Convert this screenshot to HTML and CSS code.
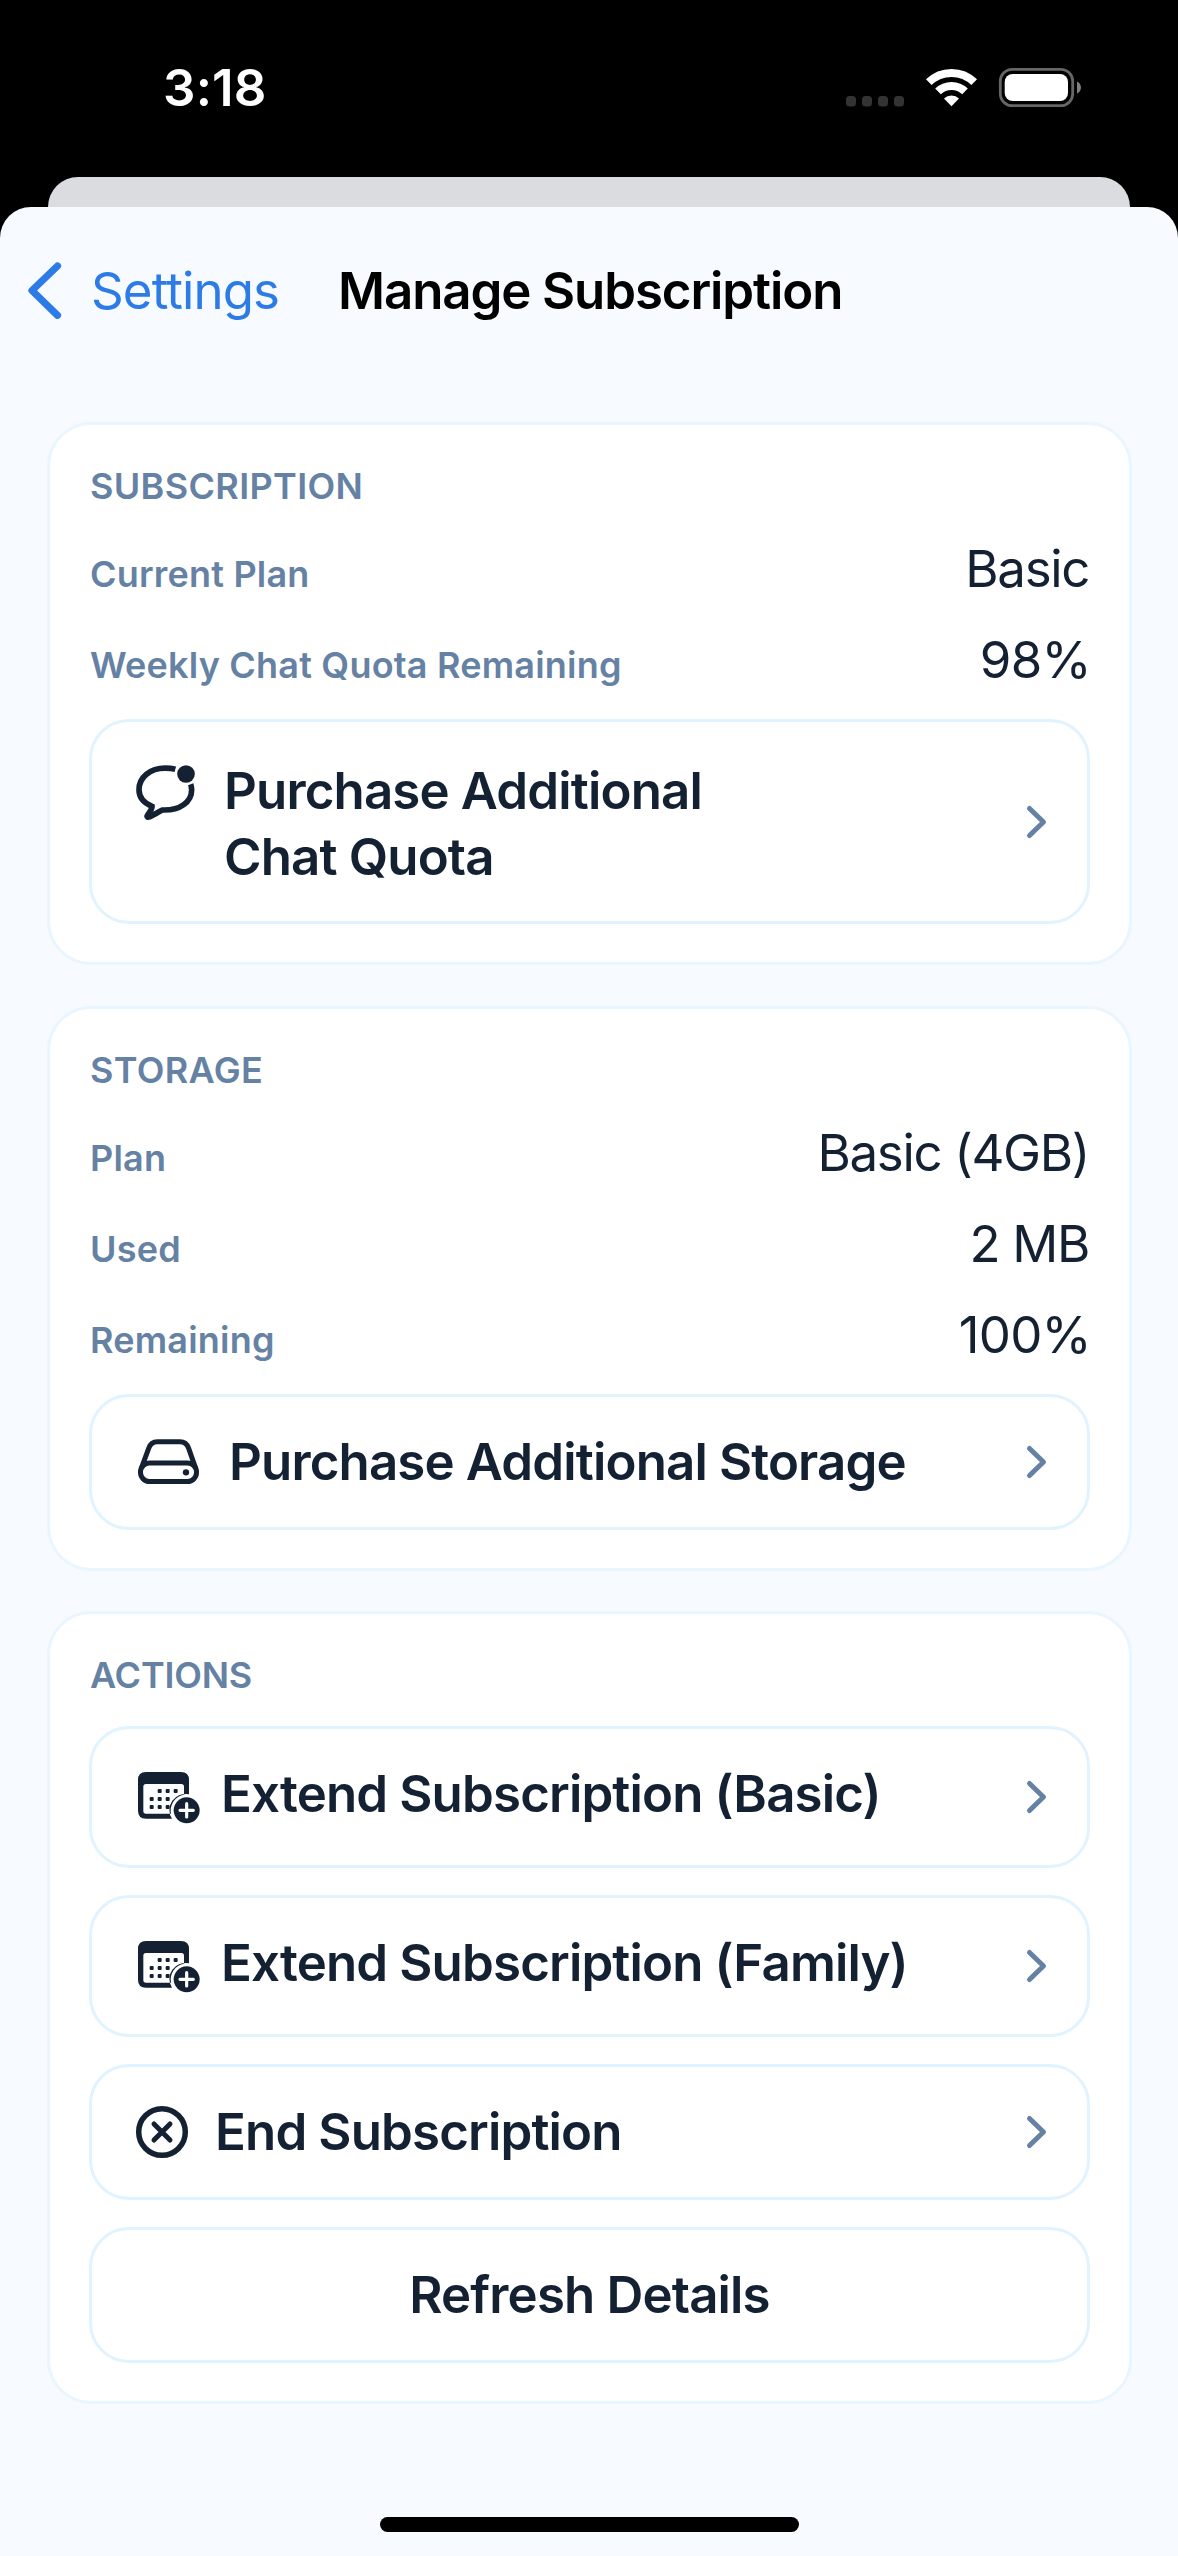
FILE: index.html
```html
<!DOCTYPE html>
<html lang="en">
<head>
<meta charset="utf-8">
<title>Manage Subscription</title>
<link rel="stylesheet" href="styles.css">
</head>
<body>
<svg class="sprite" aria-hidden="true">
  <symbol id="chevron" viewBox="0 0 24 36"><path d="M4.5 4.5 L18.5 18 L4.5 31.5" fill="none" stroke="currentColor" stroke-width="5" stroke-linecap="round" stroke-linejoin="round"/></symbol>
  <symbol id="calendar" viewBox="42 54 210 168">
    <path fill="currentColor" fill-rule="evenodd" d="M78 63 H183 Q207 63 207 87 V130 A48 48 0 0 0 156 203 H78 Q54 203 54 179 V87 Q54 63 78 63 Z M78 99 Q70 99 70 107 V180 Q70 188 78 188 H153 A48 48 0 0 1 192 131 V107 Q192 99 184 99 Z"/>
    <g fill="currentColor">
      <rect x="113" y="114" width="12" height="12" rx="3"/><rect x="137" y="114" width="12" height="12" rx="3"/><rect x="161" y="114" width="12" height="12" rx="3"/>
      <rect x="89" y="138" width="12" height="12" rx="3"/><rect x="113" y="138" width="12" height="12" rx="3"/><rect x="137" y="138" width="12" height="12" rx="3"/>
      <rect x="89" y="162" width="12" height="12" rx="3"/><rect x="113" y="162" width="12" height="12" rx="3"/><rect x="137" y="162" width="12" height="12" rx="3"/>
      <circle cx="200" cy="178" r="39"/>
    </g>
    <path d="M180 178 H220 M200 158 V198" stroke="#fff" stroke-width="9.5" stroke-linecap="round"/>
  </symbol>
</svg>

<header class="status">
  <span class="time">3:18</span>
  <svg class="indicators" width="240" height="44" viewBox="843 65 240 44">
    <g fill="#333"><rect x="846" y="96" width="10" height="10.5" rx="3.5"/><rect x="862" y="96" width="10" height="10.5" rx="3.5"/><rect x="878" y="96" width="10" height="10.5" rx="3.5"/><rect x="894" y="96" width="10" height="10.5" rx="3.5"/></g>
    <g fill="none" stroke="#fff" stroke-width="8">
      <path d="M928.8 82.2 A32.4 32.4 0 0 1 974.2 82.2"/>
      <path d="M938 91.4 A19.3 19.3 0 0 1 965 91.4"/>
    </g>
    <path fill="#fff" d="M951.5 106.3 L944 98.6 A10.8 10.8 0 0 1 959 98.6 Z"/>
    <rect x="1000.3" y="69.3" width="72.4" height="36.4" rx="12" fill="none" stroke="#666" stroke-width="2.8"/>
    <rect x="1004.7" y="74" width="63.3" height="27" rx="8" fill="#fff"/>
    <path fill="#808080" d="M1077 81.5 C1082.3 83.5 1082.3 91.5 1077 93.5 Z"/>
  </svg>
</header>

<div class="backdrop"></div>

<main class="sheet">
  <nav class="navbar">
    <svg class="back" width="40" height="64" viewBox="25 258 40 64"><path d="M57.5 266 L32 290.5 L57.5 315.3" fill="none" stroke="#2c7be6" stroke-width="7.2" stroke-linecap="round" stroke-linejoin="round"/></svg>
    <a class="back-label">Settings</a>
    <h1>Manage Subscription</h1>
  </nav>

  <section class="card">
    <h2>SUBSCRIPTION</h2>
    <div class="row"><span class="label">Current Plan</span><span class="value">Basic</span></div>
    <div class="row"><span class="label">Weekly Chat Quota Remaining</span><span class="value percent">98%</span></div>
    <button class="action two-line">
      <svg class="icon chat" width="70" height="64" viewBox="42 51 210 192">
        <path d="M166 82 C155 79 146 78.500 135 78.500 C91 78.500 57 106 57 143 C57 165 70 182 96 193 C97 205 83 215 81 223 Q81 226 86 225 C97 223 112 211 127 204 C180 206 215 180 215 143 Q215 135 212 127" fill="none" stroke="currentColor" stroke-width="17"/>
        <circle cx="198" cy="96" r="26.500" fill="currentColor"/>
      </svg>
      <span class="text">Purchase Additional<br>Chat Quota</span>
      <svg class="chevron" width="24" height="36"><use href="#chevron"/></svg>
    </button>
  </section>

  <section class="card">
    <h2>STORAGE</h2>
    <div class="row"><span class="label">Plan</span><span class="value">Basic (4GB)</span></div>
    <div class="row"><span class="label">Used</span><span class="value">2 MB</span></div>
    <div class="row"><span class="label">Remaining</span><span class="value percent">100%</span></div>
    <button class="action">
      <svg class="icon drive" width="70" height="56" viewBox="42 41 210 168">
        <g fill="none" stroke="currentColor" stroke-width="15" stroke-linejoin="round">
          <path d="M64 144 L86 84 Q93 64.500 112 64.500 H180 Q199 64.500 206 84 L227 144"/>
          <rect x="61.500" y="128" width="168" height="55.500" rx="27"/>
        </g>
        <circle cx="198" cy="156" r="9.500" fill="currentColor"/>
      </svg>
      <span class="text">Purchase Additional Storage</span>
      <svg class="chevron" width="24" height="36"><use href="#chevron"/></svg>
    </button>
  </section>

  <section class="card actions">
    <h2>ACTIONS</h2>
    <div class="stack">
      <button class="action tall">
        <svg class="icon calendar" width="70" height="56"><use href="#calendar"/></svg>
        <span class="text">Extend Subscription (Basic)</span>
        <svg class="chevron" width="24" height="36"><use href="#chevron"/></svg>
      </button>
      <button class="action tall">
        <svg class="icon calendar" width="70" height="56"><use href="#calendar"/></svg>
        <span class="text">Extend Subscription (Family)</span>
        <svg class="chevron" width="24" height="36"><use href="#chevron"/></svg>
      </button>
      <button class="action">
        <svg class="icon end" width="60" height="60" viewBox="0 0 60 60"><g fill="none" stroke="currentColor"><circle cx="28" cy="30" r="23.300" stroke-width="5.500"/><path d="M20 22 L36 38 M36 22 L20 38" stroke-width="5" stroke-linecap="round"/></g></svg>
        <span class="text">End Subscription</span>
        <svg class="chevron" width="24" height="36"><use href="#chevron"/></svg>
      </button>
      <button class="action centered"><span class="text">Refresh Details</span></button>
    </div>
  </section>

  <div class="home-indicator"></div>
</main>
</body>
</html>
```
FILE: styles.css
```css
* { box-sizing: border-box; }

body {
  margin: 0;
  width: 1178px;
  height: 2556px;
  display: flex;
  flex-direction: column;
  overflow: hidden;
  background: #000;
  color: #142132;
  font-family: Inter, "Liberation Sans", sans-serif;
}

svg { display: block; flex: none; }
.sprite { display: none; }

.status {
  height: 177px;
  padding: 57px 95px 0 163px;
  display: flex;
  justify-content: space-between;
  align-items: flex-start;
  color: #fff;
}
.time {
  font-size: 51px;
  line-height: 61px;
  font-weight: 600;
  letter-spacing: 0.2px;
}
.indicators { margin-top: 8px; }

.backdrop {
  height: 30px;
  margin: 0 48px;
  border-radius: 31px 31px 0 0;
  background: #dadce0;
}

.sheet {
  height: 2349px;
  padding: 0 46px 24px 47px;
  display: flex;
  flex-direction: column;
  border-radius: 31px 31px 0 0;
  background: #f7faff;
}

.navbar {
  height: 215px;
  margin-left: -22px;
  padding-top: 51px;
  display: flex;
  align-items: flex-start;
  font-size: 51px;
  line-height: 66px;
}
.back-label {
  width: 247px;
  margin-left: 26px;
  color: #2c7be6;
  letter-spacing: -0.9px;
}
h1 {
  margin: 0;
  color: #000;
  font-size: 51px;
  font-weight: 600;
  letter-spacing: -1.1px;
}

.card {
  margin-bottom: 41px;
  padding: 39px 39px 38px;
  border: 3px solid #e9f6ff;
  border-radius: 44px;
  background: #fff;
}
.card + .card { margin-bottom: 40px; }

h2 {
  margin: 0;
  padding-left: 1px;
  color: #6581a3;
  font-size: 36px;
  line-height: 44px;
  font-weight: 600;
  letter-spacing: 0.35px;
}
.actions h2 { letter-spacing: -0.2px; }

.row {
  height: 61px;
  margin-top: 30px;
  display: flex;
  justify-content: space-between;
  align-items: baseline;
}
.label {
  padding-left: 1px;
  color: #6581a3;
  font-size: 36px;
  line-height: 44px;
  font-weight: 600;
  letter-spacing: 0.2px;
}
.value {
  margin-right: 1px;
  font-size: 51px;
  line-height: 61px;
  letter-spacing: -1.35px;
}
.percent {
  margin-right: -1px;
  letter-spacing: -0.7px;
}

.action {
  width: 1001px;
  height: 136px;
  margin: 29px 0 0;
  padding: 0 38px 0 42px;
  display: flex;
  align-items: center;
  border: 3px solid #e1f3ff;
  border-radius: 40px;
  background: #fff;
  color: #142132;
  font: 600 51px/66px Inter, "Liberation Sans", sans-serif;
  letter-spacing: -0.85px;
  text-align: left;
}
.action .text { flex: 1; }
.chevron { color: #6581a3; }

.two-line {
  height: 205px;
  align-items: flex-start;
  padding-top: 36px;
  padding-bottom: 36px;
}
.two-line .chevron { align-self: center; }
.chat { margin: 1px 20px 0 0; }
.drive { margin-right: 25px; }
.calendar { margin-right: 17px; }
.end { margin-right: 21px; }

.stack {
  margin-top: 29px;
  display: flex;
  flex-direction: column;
  gap: 27px;
}
.stack .action { margin-top: 0; }
.tall { height: 142px; }
.tall .text { padding-bottom: 7px; }
.centered { text-align: center; padding: 0; }

.home-indicator {
  width: 419px;
  height: 15px;
  margin: auto auto 0;
  border-radius: 8px;
  background: #000;
}
```
